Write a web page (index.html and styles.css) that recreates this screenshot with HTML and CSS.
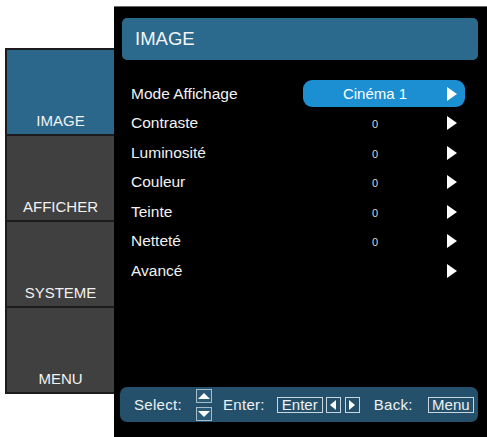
FILE: index.html
```html
<!DOCTYPE html>
<html>
<head>
<meta charset="utf-8">
<link rel="stylesheet" href="styles.css">
</head>
<body>
<div class="screen">
  <nav class="sidebar">
    <div class="tab active">IMAGE</div>
    <div class="tab">AFFICHER</div>
    <div class="tab">SYSTEME</div>
    <div class="tab">MENU</div>
  </nav>
  <main class="panel">
    <header class="title">IMAGE</header>
    <ul class="rows">
      <li class="row"><span class="label">Mode Affichage</span><span class="value selected"><span class="val">Cinéma 1</span><span class="arrow"></span></span></li>
      <li class="row"><span class="label">Contraste</span><span class="value"><span class="val small">0</span><span class="arrow"></span></span></li>
      <li class="row"><span class="label">Luminosité</span><span class="value"><span class="val small">0</span><span class="arrow"></span></span></li>
      <li class="row"><span class="label">Couleur</span><span class="value"><span class="val small">0</span><span class="arrow"></span></span></li>
      <li class="row"><span class="label">Teinte</span><span class="value"><span class="val small">0</span><span class="arrow"></span></span></li>
      <li class="row"><span class="label">Netteté</span><span class="value"><span class="val small">0</span><span class="arrow"></span></span></li>
      <li class="row"><span class="label">Avancé</span><span class="value"><span class="val small"></span><span class="arrow"></span></span></li>
    </ul>
    <footer class="help">
      <span class="hlabel">Select:</span>
      <span class="updown">
        <span class="key-sm"><span class="tri up"></span></span>
        <span class="key-sm"><span class="tri down"></span></span>
      </span>
      <span class="hlabel enter">Enter:</span>
      <span class="key word">Enter</span>
      <span class="key-lr"><span class="tri left"></span></span>
      <span class="key-lr"><span class="tri right"></span></span>
      <span class="hlabel back">Back:</span>
      <span class="key word">Menu</span>
    </footer>
  </main>
</div>
</body>
</html>
```

FILE: styles.css
```css
* { box-sizing: border-box; }
html, body { margin: 0; padding: 0; background: #ffffff; }
body {
  width: 487px;
  height: 437px;
  overflow: hidden;
  font-family: "Liberation Sans", Arial, sans-serif;
  color: #ffffff;
}
.screen {
  display: flex;
  align-items: flex-start;
  height: 437px;
}
.sidebar {
  margin-top: 48px;
  margin-left: 5px;
  width: 109px;
  background: #1c1c1c;
  border: 2px solid #1c1c1c;
  border-right: none;
  display: flex;
  flex-direction: column;
  gap: 2px;
}
.tab {
  height: 84px;
  background: #404040;
  display: flex;
  align-items: flex-end;
  justify-content: center;
  padding-bottom: 5px;
  font-size: 15px;
  line-height: 16px;
  color: #f2f2f2;
}
.tab.active { background: #2a678a; }
.panel {
  margin-top: 6px;
  width: 373px;
  height: 431px;
  background: #000000;
  border-top: 1px solid #6a6a6a;
  display: flex;
  flex-direction: column;
}
.title {
  margin: 11px 9px 0 8px;
  height: 42px;
  background: #2b6a8d;
  border-radius: 5px;
  font-size: 18.5px;
  line-height: 42px;
  padding-left: 13px;
  color: #f4f4f4;
}
.rows {
  list-style: none;
  margin: 19px 0 0 0;
  padding: 0;
}
.row {
  height: 29.5px;
  display: flex;
  align-items: center;
  padding-left: 17px;
  padding-right: 22px;
  font-size: 15.5px;
}
.label { flex: 1; color: #f2f2f2; }
.value {
  width: 162px;
  height: 27px;
  display: flex;
  align-items: center;
  padding-right: 8px;
  border-radius: 9px;
}
.value.selected { background: #1b8fd2; }
.val {
  flex: 1;
  text-align: center;
  font-size: 15px;
  color: #ffffff;
}
.val.small { font-size: 11px; color: #d8d8d8; padding-top: 2px; }
.arrow {
  width: 0;
  height: 0;
  border-top: 7px solid transparent;
  border-bottom: 7px solid transparent;
  border-left: 10px solid #ffffff;
}
.help {
  margin: auto 9px 15px 6px;
  height: 35px;
  background: #25506b;
  border-radius: 7px;
  display: flex;
  align-items: center;
  padding-left: 14px;
  font-size: 15px;
  color: #eef2f4;
  letter-spacing: 0.3px;
}
.updown {
  display: flex;
  flex-direction: column;
  gap: 4px;
  margin-left: 14px;
}
.key-sm {
  width: 16px;
  height: 14px;
  border: 1px solid #a8bcc8;
  background: #2a5a76;
  display: flex;
  align-items: center;
  justify-content: center;
}
.tri { width: 0; height: 0; }
.tri.up {
  border-left: 6px solid transparent;
  border-right: 6px solid transparent;
  border-bottom: 6px solid #ffffff;
}
.tri.down {
  border-left: 6px solid transparent;
  border-right: 6px solid transparent;
  border-top: 6px solid #ffffff;
}
.tri.left {
  border-top: 5px solid transparent;
  border-bottom: 5px solid transparent;
  border-right: 6px solid #ffffff;
}
.tri.right {
  border-top: 5px solid transparent;
  border-bottom: 5px solid transparent;
  border-left: 6px solid #ffffff;
}
.enter { margin-left: 11px; }
.key {
  height: 16px;
  border: 1px solid #c8d6de;
  display: flex;
  align-items: center;
  justify-content: center;
  line-height: 14px;
  letter-spacing: 0;
}
.key.word { padding: 0 3px; }
.enter + .key { margin-left: 12px; width: 46px; }
.key-lr {
  width: 15px;
  height: 16px;
  border: 1px solid #c8d6de;
  display: flex;
  align-items: center;
  justify-content: center;
  margin-left: 3px;
}
.key-lr + .key-lr { margin-left: 4px; }
.back { margin-left: 14px; }
.back + .key { margin-left: 15px; width: 46px; }
```
